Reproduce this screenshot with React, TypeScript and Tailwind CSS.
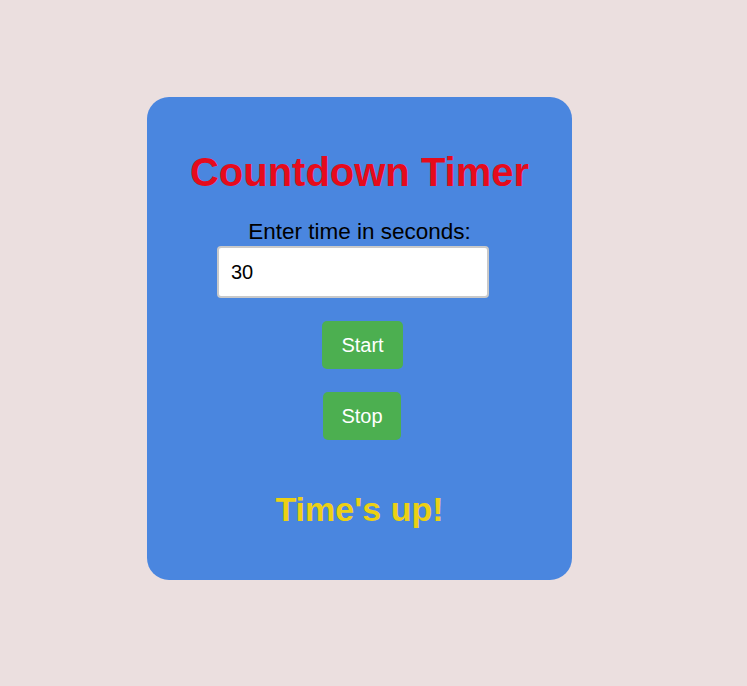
export default function App() {
  return (
    <div className="min-h-[686px] w-full bg-[#ebdfdf] pt-[97px] pl-[147px] font-['Liberation_Sans',Arial,sans-serif]">
      <div className="flex h-[483px] w-[425px] flex-col items-center rounded-[22px] bg-[#4a86df] pt-[52px]">
        <h1 className="text-[40px] font-bold leading-[46px] text-[#e60b1c]">Countdown Timer</h1>
        <label className="mt-6 text-[22.5px] leading-[26px] text-black">Enter time in seconds:</label>
        <input
          type="text"
          defaultValue="30"
          className="mt-px ml-[-13px] h-[52px] w-[272px] rounded-[4px] border-2 border-[#c9c9c9] bg-white px-3 text-[20px] text-black outline-none"
        />
        <button className="mt-[23px] ml-[6px] h-12 w-[81px] rounded-[5px] bg-[#4caf50] text-[20px] text-white">Start</button>
        <button className="mt-[23px] ml-[5px] h-12 w-[78px] rounded-[5px] bg-[#4caf50] text-[20px] text-white">Stop</button>
        <p className="mt-[50px] text-[34px] font-bold leading-[39px] text-[#ecd014]">Time's up!</p>
      </div>
    </div>
  );
}
